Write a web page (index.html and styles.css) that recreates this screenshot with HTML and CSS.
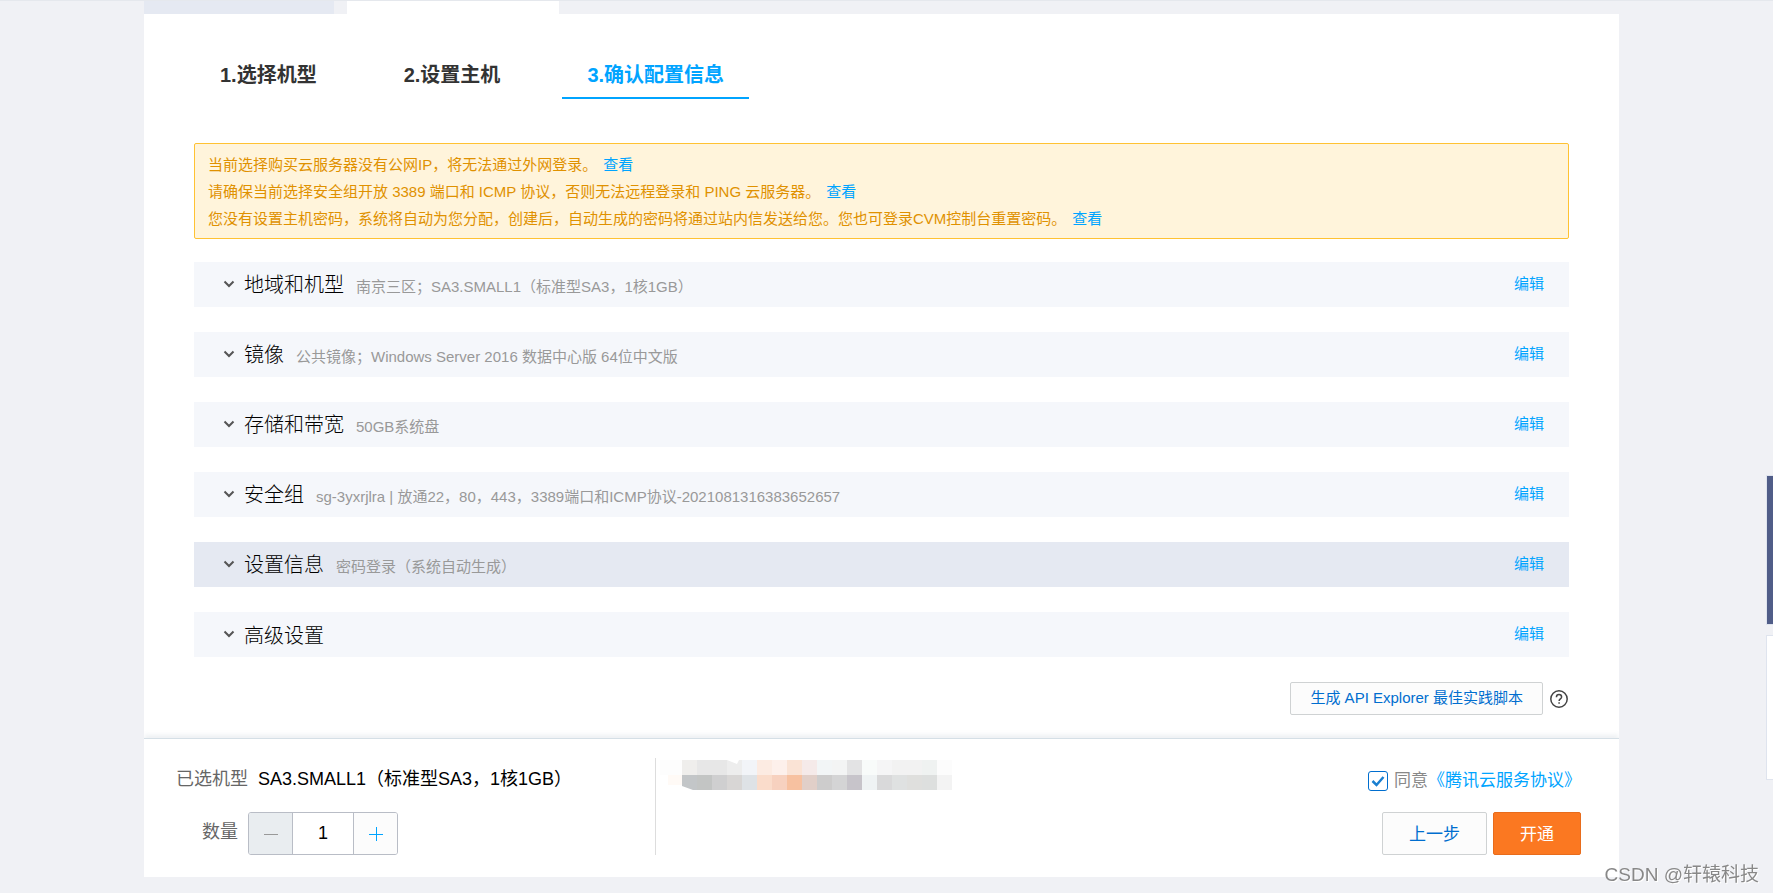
FILE: index.html
```html
<!DOCTYPE html>
<html lang="zh-CN">
<head>
    <meta charset="UTF-8">
    <meta name="viewport" content="width=device-width, initial-scale=1.0">
    <title>确认配置信息</title>
    <link rel="stylesheet" href="styles.css">
</head>
<body>
    <div class="page">
        <div class="top-tabs">
            <div class="top-tab"></div>
            <div class="top-tab active"></div>
        </div>

        <main class="panel">
            <nav class="steps">
                <a href="#" class="step">1.选择机型</a>
                <a href="#" class="step">2.设置主机</a>
                <a href="#" class="step active">3.确认配置信息</a>
            </nav>

            <div class="alert">
                <p>当前选择购买云服务器没有公网IP，将无法通过外网登录。<a href="#">查看</a></p>
                <p>请确保当前选择安全组开放 3389 端口和 ICMP 协议，否则无法远程登录和 PING 云服务器。<a href="#">查看</a></p>
                <p>您没有设置主机密码，系统将自动为您分配，创建后，自动生成的密码将通过站内信发送给您。您也可登录CVM控制台重置密码。<a href="#">查看</a></p>
            </div>

            <div class="sections">
                <div class="section">
                    <button type="button" class="section-toggle">
                        <svg class="chevron" viewBox="0 0 12 8"><path d="M1.5 1.5L6 6l4.500-4.500"/></svg>
                        <span class="section-title">地域和机型</span>
                        <span class="section-desc">南京三区；SA3.SMALL1（标准型SA3，1核1GB）</span>
                    </button>
                    <a href="#" class="edit">编辑</a>
                </div>
                <div class="section">
                    <button type="button" class="section-toggle">
                        <svg class="chevron" viewBox="0 0 12 8"><path d="M1.5 1.5L6 6l4.500-4.500"/></svg>
                        <span class="section-title">镜像</span>
                        <span class="section-desc">公共镜像；Windows Server 2016 数据中心版 64位中文版</span>
                    </button>
                    <a href="#" class="edit">编辑</a>
                </div>
                <div class="section">
                    <button type="button" class="section-toggle">
                        <svg class="chevron" viewBox="0 0 12 8"><path d="M1.5 1.5L6 6l4.500-4.500"/></svg>
                        <span class="section-title">存储和带宽</span>
                        <span class="section-desc">50GB系统盘</span>
                    </button>
                    <a href="#" class="edit">编辑</a>
                </div>
                <div class="section">
                    <button type="button" class="section-toggle">
                        <svg class="chevron" viewBox="0 0 12 8"><path d="M1.5 1.5L6 6l4.500-4.500"/></svg>
                        <span class="section-title">安全组</span>
                        <span class="section-desc">sg-3yxrjlra | 放通22，80，443，3389端口和ICMP协议-2021081316383652657</span>
                    </button>
                    <a href="#" class="edit">编辑</a>
                </div>
                <div class="section current">
                    <button type="button" class="section-toggle">
                        <svg class="chevron" viewBox="0 0 12 8"><path d="M1.5 1.5L6 6l4.500-4.500"/></svg>
                        <span class="section-title">设置信息</span>
                        <span class="section-desc">密码登录（系统自动生成）</span>
                    </button>
                    <a href="#" class="edit">编辑</a>
                </div>
                <div class="section">
                    <button type="button" class="section-toggle">
                        <svg class="chevron" viewBox="0 0 12 8"><path d="M1.5 1.5L6 6l4.500-4.500"/></svg>
                        <span class="section-title">高级设置</span>
                    </button>
                    <a href="#" class="edit">编辑</a>
                </div>
            </div>

            <div class="api-row">
                <button type="button" class="btn btn-api">生成 API Explorer 最佳实践脚本</button>
                <svg class="help" viewBox="0 0 18 18">
                    <circle cx="9" cy="9" r="8.200"/>
                    <path d="M6.400 7.200c0-1.700 1.100-2.700 2.600-2.700s2.600 1 2.600 2.400c0 1.900-2.500 2-2.500 4"/>
                    <path d="M9.100 12.200v1.500"/>
                </svg>
            </div>
        </main>

        <footer class="order-bar">
            <div class="order-info">
                <div class="order-line">
                    <span class="order-label">已选机型</span>
                    <span class="order-value">SA3.SMALL1（标准型SA3，1核1GB）</span>
                </div>
                <div class="order-line quantity-line">
                    <label class="order-label" for="quantity">数量</label>
                    <div class="stepper">
                        <button type="button" class="minus" aria-label="减少" disabled>
                            <svg viewBox="0 0 14 14"><path d="M0 7.500h14"/></svg>
                        </button>
                        <input type="text" id="quantity" value="1">
                        <button type="button" class="plus" aria-label="增加">
                            <svg viewBox="0 0 14 14"><path d="M0 7.500h14M7.500 0v14"/></svg>
                        </button>
                    </div>
                </div>
            </div>

            <div class="order-price">
                <svg class="mosaic" viewBox="0 0 292 30" shape-rendering="crispEdges">
                    <rect x="0" width="22" height="15" fill="#fdfdfd"/>
                    <rect x="8" y="15" width="14" height="10" fill="#fffaf6"/>
                    <rect x="22" width="15" height="15" fill="#efeeec"/>
                    <rect x="37" width="30" height="15" fill="#e7e7e7"/>
                    <rect x="67" width="15" height="15" fill="#ededed"/>
                    <rect x="82" width="15" height="15" fill="#f2f4f8"/>
                    <rect x="97" width="15" height="15" fill="#fcebe2"/>
                    <rect x="112" width="15" height="15" fill="#fdf0eb"/>
                    <rect x="127" width="15" height="15" fill="#fae3d5"/>
                    <rect x="142" width="15" height="15" fill="#f5eae9"/>
                    <rect x="157" width="15" height="15" fill="#f2f5f6"/>
                    <rect x="172" width="15" height="15" fill="#f3f4f4"/>
                    <rect x="187" width="15" height="15" fill="#e3e3e4"/>
                    <rect x="202" width="15" height="15" fill="#f8fbfa"/>
                    <rect x="217" width="15" height="15" fill="#f5f5f6"/>
                    <rect x="232" width="30" height="15" fill="#f2f2f2"/>
                    <rect x="262" width="15" height="15" fill="#eff2f1"/>
                    <rect x="277" width="15" height="15" fill="#fcfcfc"/>
                    <rect x="22" y="15" width="15" height="15" fill="#c3c6c8"/>
                    <rect x="37" y="15" width="15" height="15" fill="#c3c5c4"/>
                    <rect x="52" y="15" width="15" height="15" fill="#cfcfd0"/>
                    <rect x="67" y="15" width="15" height="15" fill="#d8d6d5"/>
                    <rect x="82" y="15" width="15" height="15" fill="#dee2e6"/>
                    <rect x="97" y="15" width="15" height="15" fill="#fadccb"/>
                    <rect x="112" y="15" width="15" height="15" fill="#f7d1bf"/>
                    <rect x="127" y="15" width="15" height="15" fill="#f7c1a0"/>
                    <rect x="142" y="15" width="15" height="15" fill="#e1cfc8"/>
                    <rect x="157" y="15" width="15" height="15" fill="#cdcccc"/>
                    <rect x="172" y="15" width="15" height="15" fill="#d4d4d5"/>
                    <rect x="187" y="15" width="15" height="15" fill="#c7c4ca"/>
                    <rect x="202" y="15" width="15" height="15" fill="#eff3f4"/>
                    <rect x="217" y="15" width="15" height="15" fill="#d9d9da"/>
                    <rect x="232" y="15" width="15" height="15" fill="#dfe1e1"/>
                    <rect x="247" y="15" width="15" height="15" fill="#dfdfdd"/>
                    <rect x="262" y="15" width="15" height="15" fill="#dddfde"/>
                    <rect x="277" y="15" width="15" height="15" fill="#f3f3f3"/>
                    <path d="M67 0h12l-2 4zM22 26l11 4H22z" fill="#fff" shape-rendering="auto"/>
                </svg>
            </div>

            <div class="order-actions">
                <div class="agreement">
                    <input type="checkbox" id="agree" checked>
                    <label for="agree">同意</label><a href="#">《腾讯云服务协议》</a>
                </div>
                <div class="buttons">
                    <button type="button" class="btn btn-prev">上一步</button>
                    <button type="button" class="btn btn-submit">开通</button>
                </div>
            </div>
        </footer>
    </div>

    <aside class="side-tools">
        <div class="side-tool blue"></div>
        <div class="side-tool"></div>
    </aside>

    <div class="watermark">CSDN @轩辕科技</div>
</body>
</html>
```
FILE: styles.css
```css
* {
    box-sizing: border-box;
    margin: 0;
    padding: 0;
}

body {
    background-color: #f0f1f5;
    color: #000;
    font-family: "Liberation Sans", "Noto Sans CJK SC", sans-serif;
    font-size: 15px;
    line-height: 27px;
    border-top: 1px solid #e5e8ed;
}

button, input {
    font-family: inherit;
}

a {
    color: #00a4ff;
    text-decoration: none;
}

.page {
    margin: 0 154px 16px 144px;
}

/* tabs above the panel */
.top-tabs {
    display: flex;
    gap: 13px;
    height: 13px;
}

.top-tab {
    width: 190px;
    background-color: #e5e9f2;
}

.top-tab.active {
    width: 212px;
    background-color: #fff;
}

.panel {
    background-color: #fff;
    padding: 35px 50px 23px;
}

.steps {
    display: flex;
    gap: 37px;
    margin-bottom: 44px;
    padding-left: 1px;
}

.step {
    padding: 12px 25px 8px;
    border-bottom: 2px solid transparent;
    color: #333;
    font-size: 20px;
    font-weight: bold;
    line-height: 28px;
}

.step.active {
    color: #00a4ff;
    border-bottom-color: #00a4ff;
}

.alert {
    margin-bottom: 23px;
    padding: 7px 13px 6px;
    border: 1px solid #ffc233;
    border-radius: 2px;
    background-color: #fff4db;
    color: #e09100;
}

.alert a {
    margin-left: 6px;
}

/* collapsed configuration sections */
.sections {
    display: grid;
    gap: 25px;
}

.section {
    display: flex;
    align-items: center;
    justify-content: space-between;
    height: 45px;
    padding: 0 25px 0 29px;
    background-color: #f5f7fb;
}

.section.current {
    background-color: #e5e9f2;
}

.section-toggle {
    display: flex;
    align-items: baseline;
    padding-top: 2px;
    border: none;
    background: none;
    cursor: pointer;
    line-height: 30px;
}

.chevron {
    width: 12px;
    height: 8px;
    margin: 0 9px 4px 0;
    align-self: center;
    fill: none;
    stroke: #555;
    stroke-width: 2;
}

.section-title {
    color: #000;
    font-size: 20px;
    font-weight: 300;
}

.section-desc {
    margin-left: 12px;
    color: #999;
    font-size: 15px;
}

.edit {
    padding-bottom: 2px;
}

.btn {
    border: 1px solid #cfd2d3;
    border-radius: 2px;
    background-color: #fcfcfc;
    color: #006ecf;
    cursor: pointer;
}

.api-row {
    display: flex;
    align-items: center;
    justify-content: flex-end;
    gap: 7px;
    margin-top: 25px;
    padding-right: 1px;
}

.btn-api {
    height: 33px;
    padding: 0 19px 4px;
    font-size: 15px;
}

.help {
    width: 18px;
    height: 18px;
    fill: none;
    stroke: #444;
    stroke-width: 1.5;
}

/* order bar */
.order-bar {
    display: flex;
    position: relative;
    padding: 19px 38px 22px 32px;
    border-top: 1px solid #d5dfe6;
    background-color: #fff;
    box-shadow: 0 -3px 5px rgba(100, 120, 150, 0.12);
    clip-path: inset(-10px 0 0 0);
}

.order-info {
    display: flex;
    flex-direction: column;
    gap: 19px;
    width: 480px;
    border-right: 1px solid #ddd;
    font-size: 18px;
}

.order-line {
    display: flex;
    align-items: center;
    gap: 10px;
    padding-top: 8px;
}

.order-label {
    color: #666;
}

.quantity-line {
    padding: 0 0 0 26px;
}

.quantity-line .order-label {
    padding-bottom: 2px;
}

.stepper {
    display: flex;
    height: 43px;
    border: 1px solid #b9bdc6;
    border-radius: 3px;
    overflow: hidden;
}

.stepper button {
    display: flex;
    align-items: center;
    justify-content: center;
    width: 43px;
    border: none;
    background-color: #fcfcfc;
}

.stepper button.minus {
    background-color: #e9edf0;
}

.stepper svg {
    width: 14px;
    height: 14px;
    fill: none;
    stroke: #00a4ff;
}

.stepper .minus svg {
    stroke: #999;
}

.stepper input {
    width: 62px;
    border: 1px solid #b9bdc6;
    border-width: 0 1px;
    text-align: center;
    color: #000;
    font-size: 18px;
}

.order-price {
    flex: 1;
    padding: 2px 4px;
}

.mosaic {
    display: block;
    width: 292px;
    height: 30px;
}

.order-actions {
    display: flex;
    flex-direction: column;
    gap: 18px;
    align-items: flex-end;
    font-size: 17px;
}

.agreement {
    display: flex;
    align-items: center;
    padding-top: 9px;
    color: #888;
}

.agreement input {
    appearance: none;
    width: 20px;
    height: 20px;
    margin-right: 6px;
    border: 1px solid #006ecf;
    border-radius: 3px;
    background: #fff url("data:image/svg+xml,%3Csvg xmlns='http://www.w3.org/2000/svg' viewBox='0 0 18 18'%3E%3Cpath d='M3.500 9l4 4 7-8' fill='none' stroke='%231b7fd0' stroke-width='2.500'/%3E%3C/svg%3E") center no-repeat;
}

.buttons {
    display: flex;
    gap: 6px;
}

.btn-prev,
.btn-submit {
    height: 43px;
    padding: 0 26px 3px;
    font-size: 17px;
}

.btn-submit {
    border-color: #e86c1c;
    background-color: #fb7821;
    color: #fff;
}

/* tools pinned to the right edge */
.side-tools {
    position: fixed;
    top: 475px;
    right: 0;
    display: grid;
    gap: 10px;
}

.side-tool {
    width: 7px;
    height: 145px;
    border: 1px solid #dfe4ee;
    border-right: none;
    background-color: #fff;
}

.side-tool.blue {
    height: 150px;
    background-color: #505d88;
}

.watermark {
    position: fixed;
    right: 14px;
    bottom: 5px;
    color: #888;
    font-size: 19px;
    text-shadow: 1px 1px 0 #fff;
}
```
